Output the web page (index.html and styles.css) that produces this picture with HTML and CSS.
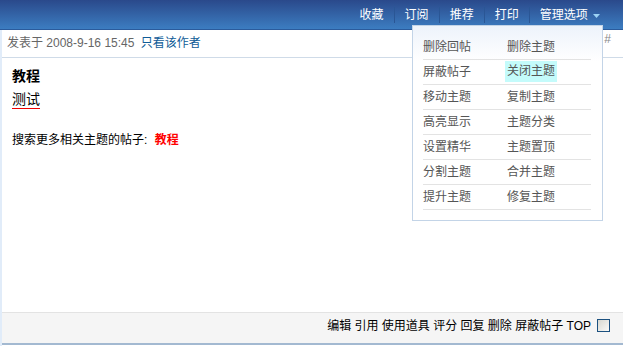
FILE: index.html
```html
<!doctype html>
<html lang="zh-CN">
	<head>
		<title>教程</title>
		<meta charset="UTF-8">
		<link rel="stylesheet" href="styles.css">
	</head>

	<body>
		<div class="topbar">
			<a href="#">收藏</a>
			<a href="#">订阅</a>
			<a href="#">推荐</a>
			<a href="#">打印</a>
			<a href="#" class="manage">管理选项
				<svg class="arrow" width="7" height="4" viewBox="0 0 7 4"><path d="M0 0h7L3.5 4z" fill="#9cd2f4"/></svg>
			</a>
		</div>

		<div class="post">
			<div class="meta">
				<span>发表于 2008-9-16 15:45 <a href="#" class="author">只看该作者</a></span>
				<span class="hash">#</span>
			</div>

			<div class="content">
				<h2>教程</h2>
				<div class="body-text"><span class="marked">测试</span></div>
				<p class="related">搜索更多相关主题的帖子: <a href="#">教程</a></p>
			</div>

			<div class="footer">
				<span>编辑 引用 使用道具 评分 回复 删除 屏蔽帖子 TOP</span>
				<span class="check"></span>
			</div>

			<ul class="menu">
				<li><a href="#">删除回帖</a></li>
				<li><a href="#">删除主题</a></li>
				<li><a href="#">屏蔽帖子</a></li>
				<li><a href="#" class="active">关闭主题</a></li>
				<li><a href="#">移动主题</a></li>
				<li><a href="#">复制主题</a></li>
				<li><a href="#">高亮显示</a></li>
				<li><a href="#">主题分类</a></li>
				<li><a href="#">设置精华</a></li>
				<li><a href="#">主题置顶</a></li>
				<li><a href="#">分割主题</a></li>
				<li><a href="#">合并主题</a></li>
				<li><a href="#">提升主题</a></li>
				<li><a href="#">修复主题</a></li>
			</ul>
		</div>
	</body>
</html>
```

FILE: styles.css
```css
* {
	padding: 0;
	margin: 0;
	box-sizing: border-box;
}

body {
	font-family: "Liberation Sans", "Noto Sans CJK SC", sans-serif;
	font-size: 12px;
	color: #000;
	background: #fff;
	width: 623px;
	height: 346px;
	overflow: hidden;
}

a {
	text-decoration: none;
	color: inherit;
}

.topbar {
	height: 30px;
	display: flex;
	justify-content: flex-end;
	align-items: center;
	padding-right: 13px;
	background: linear-gradient(#2a498b, #3c7dc1);
	border-bottom: 1px solid #2b5b9c;
}

.topbar a {
	color: #fff;
	line-height: 16px;
	padding: 0 10px;
	border-left: 1px solid #2a5695;
}

.topbar a:first-child {
	border-left: 0;
}

.topbar .arrow {
	margin-left: 2px;
	vertical-align: 1px;
}

.post {
	position: relative;
	height: 316px;
	display: flex;
	flex-direction: column;
	border-left: 2px solid #e1ecf9;
}

.meta {
	height: 28px;
	display: flex;
	justify-content: space-between;
	line-height: 27px;
	padding: 0 10px 0 5px;
	color: #666;
	border-bottom: 1px solid #cfdbe8;
}

.meta .author {
	color: #105c97;
	margin-left: 3px;
}

.hash {
	color: #888;
	line-height: 16px;
	padding-top: 1px;
	padding-right: 2px;
}

.content {
	flex: 1;
	padding: 8px 10px 0;
}

.content h2 {
	font-size: 14px;
	line-height: 20px;
}

.body-text {
	margin-top: 4px;
	font-size: 14px;
}

.marked {
	display: inline-block;
	color: #000;
	line-height: 18px;
	border-bottom: 1px solid #e00;
}

.related {
	margin-top: 22px;
	line-height: 18px;
}

.related a {
	color: #f00;
	font-weight: bold;
	margin-left: 4px;
}

.footer {
	height: 33px;
	margin-bottom: 1px;
	display: flex;
	justify-content: flex-end;
	align-items: flex-start;
	padding: 6px 13px 0 0;
	background: #f5f5f5;
	border-top: 1px solid #e3e3e3;
	border-bottom: 2px solid #a3b9d1;
	line-height: 14px;
}

.check {
	width: 13px;
	height: 13px;
	margin-left: 6px;
	border: 1px solid #1c5180;
	background: linear-gradient(135deg, #d8d8d0, #fafaf8);
}

.menu {
	position: absolute;
	left: 410px;
	top: -5px;
	width: 191px;
	list-style: none;
	display: grid;
	grid-template-columns: 84px 84px;
	padding: 9px 11px 10px 10px;
	background: linear-gradient(#edf3fb, #fff 36px);
	border: 1px solid #c3d4e7;
}

.menu li {
	height: 25px;
	line-height: 24px;
	border-bottom: 1px solid #e3e3e3;
	color: #555;
}

.menu .active {
	display: inline-block;
	line-height: 21px;
	padding: 0 2px;
	margin-left: -2px;
	background: #c4fbfb;
	vertical-align: 1px;
}
```
